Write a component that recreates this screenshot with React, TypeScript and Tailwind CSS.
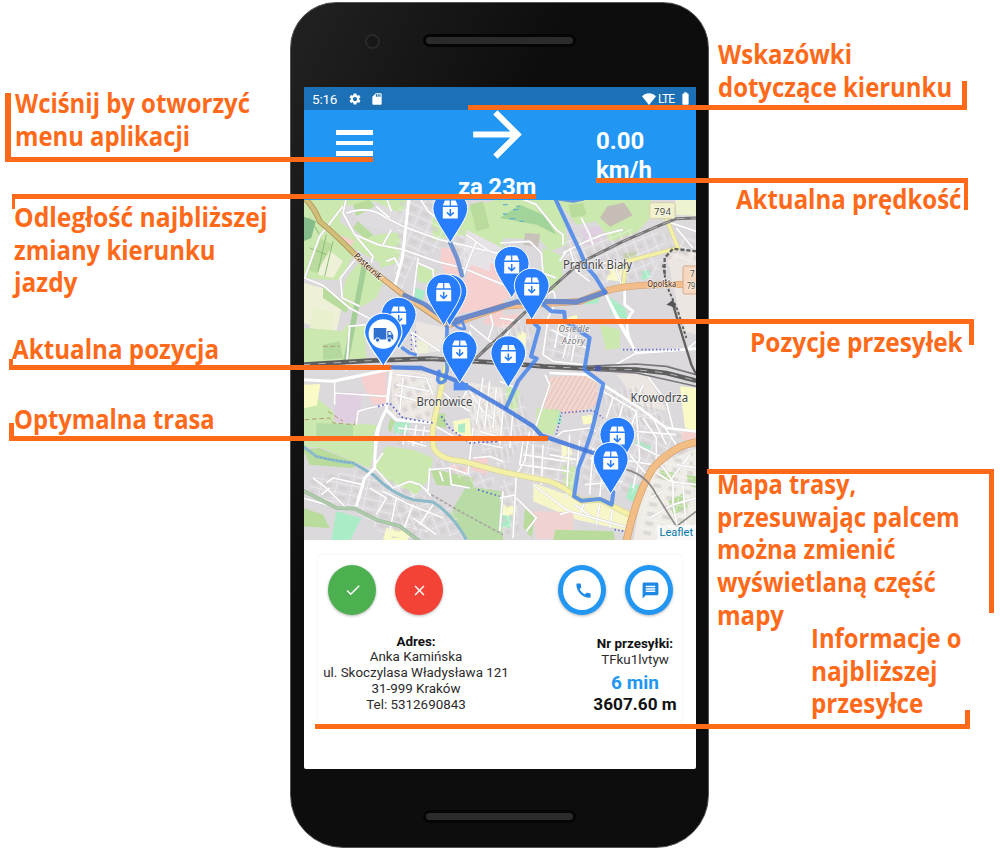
import React from "react";
import {
  MdArrowForward,
  MdCall,
  MdCheck,
  MdClose,
  MdMessage,
  MdSettings,
  MdSdCard,
  MdBatteryFull,
} from "react-icons/md";

type Shape = [color: string, points: string];

const GREEN = "#cbe8ae";
const MEADOW = "#b9dc9c";
const FIELD = "#eef0d8";
const PINK = "#f5d0ce";
const MINT = "#a9ecc6";
const SAND = "#ebe6e1";
const YELLOW = "#fafac6";
const PURPLE = "#e0cfe0";

const northWest: Shape[] = [
  [GREEN, "0,0 310,0 300,40 215,45 120,20 110,70 170,120 290,100 292,170 240,200 150,150 60,90 0,100"],
  ["#dedcdf", "125,25 215,10 300,50 300,110 180,80"],
  [GREEN, "0,90 60,90 155,165 110,245 60,245 0,240"],
  [MEADOW, "150,20 200,5 215,25 160,55"],
  [MEADOW, "165,70 210,110 190,125 150,90"],
  [FIELD, "70,150 120,190 90,240 45,230"],
  [MEADOW, "50,120 90,140 40,225 12,215"],
  ["#83bb8b", "0,55 38,70 25,120 0,130"],
  [GREEN, "170,190 245,245 220,300 150,340 115,300 130,240"],
  [FIELD, "0,255 60,270 120,310 100,400 0,375"],
  ["#e9f0cd", "30,330 95,345 85,400 20,390"],
  [MEADOW, "60,262 140,320 130,345 60,300"],
  [GREEN, "0,390 120,400 130,380 185,380 190,490 0,500"],
  ["#b4d99f", "60,440 110,430 120,480 60,485"],
  ["#a3cf96", "178,190 194,195 135,500 118,500"],
  [GREEN, "235,140 290,150 285,195 230,210"],
  [GREEN, "385,60 600,0 600,150 560,160 480,110 390,130"],
  ["#e6e2e6", "490,95 600,150 600,230 480,205"],
  [MEADOW, "500,20 540,10 560,90 520,100"],
  [PINK, "415,150 450,150 475,235 430,232 412,190"],
  [PINK, "505,200 600,235 600,322 450,350 480,260"],
  [PINK, "110,110 155,130 140,145 105,125"],
  [MINT, "332,268 366,280 358,312 330,300"],
  [GREEN, "340,200 400,215 390,260 345,250"],
  [PINK, "560,335 600,330 600,390 540,375"],
  [SAND, "340,370 430,390 410,460 330,470"],
  [FIELD, "340,430 375,430 375,465 340,465"],
];

const northEast: Shape[] = [
  [GREEN, "0,0 160,0 195,60 200,140 150,160 120,125 0,120"],
  ["#a2d39b", "60,20 130,50 170,110 110,80 0,60"],
  [GREEN, "165,0 455,0 450,60 410,105 330,130 290,70 230,80"],
  ["#c6beb4", "322,25 372,14 398,52 330,86 300,60"],
  [PURPLE, "240,95 300,85 320,115 265,145"],
  ["#c9c2ba", "75,105 120,108 115,148 70,140"],
  [PINK, "-30,195 40,225 50,290 -30,320"],
  [GREEN, "130,150 190,175 185,250 150,290 115,250"],
  [MEADOW, "205,20 250,15 260,50 215,60"],
  ["#edf2cf", "525,0 600,0 600,55 530,50"],
  [YELLOW, "330,200 370,200 360,250 320,245"],
  ["#c5cfab", "370,165 410,160 405,185 370,190"],
  [MINT, "318,290 375,330 385,365 335,350"],
  [GREEN, "300,380 360,395 360,450 318,455"],
  [MINT, "250,300 300,295 295,315 250,320"],
  [YELLOW, "200,360 230,350 235,375 205,385"],
  [PINK, "0,355 60,345 40,390 0,380"],
  [YELLOW, "55,400 80,405 75,455 50,450"],
  [SAND, "500,170 590,160 590,410 550,400"],
  [MINT, "425,220 450,215 450,240 425,245"],
];

const southWest: Shape[] = [
  [SAND, "262,0 405,20 385,160 270,140"],
  [GREEN, "0,55 90,130 100,165 220,170 215,245 200,300 150,280 60,240 0,235"],
  [YELLOW, "0,50 52,48 42,112 0,122"],
  ["#b7dba5", "40,165 150,170 150,215 40,220"],
  [PURPLE, "98,72 180,72 165,168 92,160"],
  [PINK, "175,28 250,8 250,112 208,108 185,60"],
  [MEADOW, "0,245 50,240 160,285 150,300 20,290"],
  [MINT, "275,162 322,165 312,197 272,195"],
  [MEADOW, "262,150 275,160 262,195 255,180"],
  [GREEN, "250,235 330,245 390,270 380,330 340,380 240,330 215,290"],
  [MEADOW, "380,300 510,330 510,360 400,350"],
  ["#b9dca6", "490,355 600,370 600,520 500,520 440,440"],
  [MEADOW, "395,140 425,135 430,180 400,175"],
  [YELLOW, "450,160 500,150 505,210 455,195"],
  [MINT, "465,170 487,165 485,195 465,192"],
  [SAND, "480,40 600,60 600,220 520,210"],
  [PINK, "510,270 555,270 550,320 505,305"],
  [PINK, "440,290 500,300 495,320 445,310"],
  [MINT, "100,430 175,450 140,520 85,515"],
  [MEADOW, "0,420 60,440 80,480 0,475"],
  [YELLOW, "250,480 330,490 310,520 240,515"],
];

const southEast: Shape[] = [
  ["#efd6cf", "148,28 290,15 295,110 215,140 125,120"],
  [MINT, "125,135 180,130 185,165 120,185"],
  [GREEN, "110,120 180,125 160,200 105,190"],
  [YELLOW, "245,145 275,140 280,165 250,170"],
  [GREEN, "20,50 60,70 50,130 15,110"],
  [SAND, "350,20 440,15 500,130 420,110"],
  [YELLOW, "540,55 590,60 590,190 555,180"],
  [PURPLE, "180,320 230,310 220,360 180,350"],
  [GREEN, "185,290 225,295 225,375 190,370"],
  [YELLOW, "185,230 215,235 215,280 185,275"],
  ["#f7f6c8", "100,345 230,390 330,408 395,440 390,490 230,455 100,400"],
  ["#efece6", "450,300 590,240 590,520 400,520 420,400"],
  ["#f0d3d0", "95,430 220,432 220,510 110,512"],
  [MEADOW, "165,485 340,490 345,520 160,520"],
  [MINT, "392,345 420,350 405,405 378,390"],
  [MEADOW, "480,305 525,315 520,345 475,330"],
  [MEADOW, "505,400 550,375 565,420 520,440"],
  [MEADOW, "560,320 590,325 590,360 565,350"],
  [PINK, "545,190 590,195 590,215 545,215"],
  [MINT, "410,215 455,235 450,245 405,228"],
  [YELLOW, "10,410 50,415 45,450 5,445"],
  [MINT, "0,440 35,445 30,480 0,475"],
  [MEADOW, "75,420 105,440 95,510 70,480"],
];

const townBlocks: [id: string, points: string][] = [
  ["gridA", "290,10 400,10 480,100 500,200 420,150 340,180 300,260 330,360 270,260"],
  ["gridB", "780,130 960,90 1100,110 1040,240 880,260 790,190"],
  ["gridC", "740,380 850,420 840,480 730,480"],
  ["gridA", "1010,270 1110,130 1180,110 1180,200 1110,180"],
  ["gridB", "270,530 390,540 380,670 280,650"],
  ["gridD", "480,560 660,590 680,690 600,820 520,740"],
  ["gridC", "20,840 200,810 340,890 380,1020 250,1020 150,930 20,900"],
  ["gridB", "230,820 330,880 460,940 480,1020 300,990"],
  ["gridC", "660,700 820,740 810,880 660,830"],
  ["gridA", "830,700 1000,620 1150,700 1050,800 990,890 840,860"],
  ["gridB", "590,850 640,830 650,1010 590,1010"],
  ["gridC", "1030,820 1170,740 1170,1020 1010,1020"],
  ["gridD", "880,580 1010,560 1100,680 960,680"],
  ["gridB", "400,780 580,840 560,880 400,810"],
  ["gridA", "280,690 390,700 360,750 280,740"],
  ["gridD", "590,370 690,390 670,490 560,490"],
];

const streets: string[] = [
  "M130,0 L120,45 L155,110 L210,175 L205,195",
  "M130,45 Q200,20 250,60 L300,85 L410,125 L560,160",
  "M318,0 L310,80 L298,180 L275,265",
  "M155,110 L225,140 L300,155 L400,190 L480,210 L600,260",
  "M220,25 L260,60 M250,0 L265,40 M265,95 L240,140 M350,0 L375,40 L400,60",
  "M120,25 L50,115 L5,240 L60,262 L140,330 L215,370",
  "M160,180 L112,240 L118,300 L170,325",
  "M345,180 L330,300 M345,195 L390,215 L395,290 M250,190 L275,180 L290,210",
  "M490,110 L560,160 L600,170 M480,235 L500,180 L520,130",
  "M135,385 L190,380 M140,385 L130,520 M500,380 L555,425 L600,450 M555,425 L570,380 L560,340",
  "M325,400 L345,480 M330,405 L410,460 M500,400 L520,470",
  "M591,135 L680,130 L715,165 L720,225 L760,240 M650,0 L700,20 L760,95 L780,110 L780,140",
  "M780,165 L850,130 L900,110 L960,95 M770,190 L790,160 M800,150 L820,220 L860,250",
  "M835,60 L860,110 L870,140 M880,200 L930,190 L960,270",
  "M906,285 L930,340 L960,400 L1000,465",
  "M965,270 L965,320 L990,340 Q950,380 1000,465 L1150,455 L1180,430",
  "M1000,465 L920,510 M1120,90 L1170,150 M1090,70 L1180,100",
  "M735,290 Q760,260 755,320 L735,360 L720,470 L750,490 L840,500",
  "M770,370 L755,450 M800,400 L780,480 M820,410 L805,490 M745,395 L850,450",
  "M591,360 L650,370 M620,390 L600,440",
  "M0,545 L90,550 L150,540 L210,522 L265,513 L250,635 L280,665 L310,670 L390,675",
  "M250,635 Q215,690 215,730 L215,810 L185,840 L160,925",
  "M95,545 L95,620 M95,585 L250,595 M160,680 L165,640 L200,630 L250,620",
  "M280,530 L370,540 L390,590 M280,560 L380,580 M275,590 L385,620 M300,540 L290,640",
  "M285,690 L385,700 M270,715 L370,745 M310,680 L300,740 M340,680 L330,745 M365,685 L355,735",
  "M390,680 L460,720 L600,750 M500,580 L540,640 L580,670 M410,575 L450,610 L500,640",
  "M215,800 L240,765 M215,810 L270,870 L320,850 L350,860 L385,895",
  "M30,840 L70,870 L130,930 M70,855 L90,840 L180,860 M0,900 L90,925 M55,890 L80,870",
  "M200,870 L250,900 L220,950 M240,880 L320,920 L420,960 M280,900 L260,1000 M330,920 L300,1000 M390,920 L350,980 M330,960 L400,1010",
  "M380,810 L375,880 L350,860 M380,815 L440,810 L500,830 M440,810 L445,860 L500,870 M410,820 L420,850",
  "M510,690 L495,830 M530,700 L600,720 M510,780 L560,775 L600,790",
  "M500,560 L480,600 M540,540 L520,680 M560,550 L545,690 M580,570 L570,690 M600,640 L590,740 M630,640 L620,750",
  "M591,550 L640,570 M726,530 L740,560 L690,710 M680,700 L665,790 L640,830 L630,1020",
  "M740,525 L850,530 L900,560 L1010,630 L1090,690 L1180,700",
  "M1020,515 L1060,570 L1090,610 L1110,690 M1020,560 L1000,610",
  "M760,715 L780,700 L860,690 L880,700 M740,770 L820,785 M800,710 L790,900 M830,725 L815,880",
  "M660,730 L650,800 L800,820 M660,770 L790,790 M690,740 L690,850 M720,740 L715,860",
  "M590,900 L640,890 M600,880 L590,1000 M640,900 L700,960 L670,1000",
  "M860,780 L990,790 L1050,800 M870,750 L860,890 M900,800 L890,900 M930,800 L925,870 M845,860 L960,850",
  "M900,580 L1000,640 L980,700 M930,600 L910,660 M960,620 L940,690 M1000,640 L1010,780 L990,870",
  "M1020,660 L1060,720 L1060,790 M1050,660 L1090,740 M1080,680 L1120,740 M1000,700 L1120,710",
  "M1000,740 L1080,780 M980,770 L1040,840",
  "M815,920 L870,960 L980,990 M850,900 L830,950 M890,920 L880,980 M930,920 L920,990 M800,940 L770,950",
  "M690,860 L770,920 L800,940 L980,990",
  "M1040,810 L1100,850 L1180,860 M1060,780 L1110,850 L1110,920 L1040,960 M1100,850 L1160,770",
  "M1110,920 L1180,900 M1080,880 L1040,900 M1140,860 L1150,1000 M1120,800 L1180,810 M1110,920 L1130,1020",
];

const parcelPins: [x: number, y: number][] = [
  [450.3, 243],
  [511.7, 298],
  [531.7, 320],
  [449.5, 326],
  [443.7, 325.7],
  [398.7, 349],
  [459.7, 383],
  [508.3, 387.5],
  [617.3, 469],
  [610.7, 494],
];

function Quadrant({ shapes, offset }: { shapes: Shape[]; offset: string }) {
  return (
    <g transform={offset}>
      {shapes.map(([color, points], i) => (
        <polygon key={i} points={points} fill={color} />
      ))}
    </g>
  );
}

function Grid({ id, angle, w, h }: { id: string; angle: number; w: number; h: number }) {
  return (
    <pattern id={id} width={w} height={h} patternUnits="userSpaceOnUse" patternTransform={`rotate(${angle})`}>
      <path d={`M0,0 H${w} M0,0 V${h}`} stroke="#f8f7f8" strokeWidth="4.5" fill="none" />
      <rect x={w * 0.25} y={h * 0.3} width={w * 0.5} height={h * 0.4} fill="#d3cecf" />
    </pattern>
  );
}

function ParcelPin({ x, y }: { x: number; y: number }) {
  return (
    <g transform={`translate(${x} ${y})`}>
      <path
        d="M0,0 C-5.5,-10.5 -17.4,-25 -17.4,-34.3 A17.4,17.4 0 0 1 17.4,-34.3 C17.4,-25 5.5,-10.5 0,0Z"
        fill="#277dfb"
        stroke="#fff"
        strokeWidth="1"
      />
      <path d="M-5.4,-42.6 H-.6 V-37.4 H-7.5Z M5.4,-42.6 H.6 V-37.4 H7.5Z M-7.5,-36 H7.5 V-24.4 H-7.5Z" fill="#fff" />
      <path d="M0,-34 V-27.5 M-3.4,-30.6 L0,-27.2 L3.4,-30.6" stroke="#277dfb" strokeWidth="1.5" fill="none" />
    </g>
  );
}

function TruckPin() {
  return (
    <g transform="translate(383.3 366.5)">
      <path
        d="M0,0 C-5.5,-10.5 -18.7,-24 -18.7,-34.5 A18.7,18.7 0 0 1 18.7,-34.5 C18.7,-24 5.5,-10.5 0,0Z"
        fill="#277dfb"
        stroke="#fff"
        strokeWidth="1.1"
      />
      <circle cx="0" cy="-32.5" r="14.7" fill="#fff" />
      <path d="M-9.6,-38.5 H3 V-27 H-9.6Z M4,-35.5 H7.2 L10,-31.5 V-27 H4Z" fill="#2f6fcd" />
      <path d="M5.2,-34.4 H6.8 L8.4,-31.8 H5.2Z" fill="#fff" />
      <circle cx="-5.7" cy="-26.5" r="2.2" fill="#2f6fcd" stroke="#fff" strokeWidth=".9" />
      <circle cx="6" cy="-26.5" r="2.2" fill="#2f6fcd" stroke="#fff" strokeWidth=".9" />
    </g>
  );
}

const rails = [
  "M0,500 L200,488 L380,482 L600,495 L720,505 L860,512 L1000,515 L1090,525 L1180,548",
  "M380,482 L520,480 L591,415 L690,320 L740,275 L830,195 L960,130 L1070,82 L1120,62 L1180,60",
  "M520,480 L560,440 L600,425",
];

function RouteMap() {
  return (
    <svg className="block h-[340px] w-[392px]" viewBox="304 200 392 340">
      <defs>
        <Grid id="gridA" angle={24} w={42} h={30} />
        <Grid id="gridB" angle={-22} w={30} h={38} />
        <Grid id="gridC" angle={12} w={46} h={29} />
        <Grid id="gridD" angle={78} w={50} h={17} />
        <pattern id="hatch" width="13" height="13" patternUnits="userSpaceOnUse" patternTransform="rotate(30)">
          <path d="M0,0 V13" stroke="#e3a9a4" strokeWidth="3" />
        </pattern>
      </defs>
      <g transform="translate(303 198) scale(.33333)" fill="none" strokeLinejoin="round">
        <rect width="1200" height="1050" fill="#dcd9dc" />
        <Quadrant shapes={northWest} offset="translate(0 0)" />
        <Quadrant shapes={northEast} offset="translate(591 0)" />
        <Quadrant shapes={southWest} offset="translate(0 510)" />
        <Quadrant shapes={southEast} offset="translate(591 510)" />
        <polygon points="739,538 881,525 886,620 806,650 716,630" fill="url(#hatch)" />
        {townBlocks.map(([id, points], i) => (
          <polygon key={i} points={points} fill={`url(#${id})`} opacity=".65" />
        ))}

        <path d="M20,60 L50,110 M70,110 L45,220 M20,150 L70,170 M90,130 L65,235" stroke="#8dbd78" strokeWidth="3" />
        <path d="M600,20 h14 M630,35 h16 M600,48 h12 M620,62 h18 M650,70 h12 M640,25 h10" stroke="#63b4c4" strokeWidth="4" />
        <path d="M0,745 L40,775 Q100,790 150,795 L210,830 Q270,890 330,905 L390,912 Q450,950 490,1025" stroke="#8bbac8" strokeWidth="9" />
        <path d="M40,777 L150,795 L210,830 L270,885" stroke="#6a93cc" strokeWidth="2.5" strokeDasharray="4 8" />
        <path d="M60,445 H110 M75,640 L120,670 M5,665 L80,660 L90,675 L155,680 L165,640" stroke="#b39a77" strokeWidth="3" strokeDasharray="14 8" />

        {streets.map((d, i) => (
          <g key={i}>
            <path d={d} stroke="#cfcbce" strokeWidth="7" />
            <path d={d} stroke="#fff" strokeWidth="5.2" />
          </g>
        ))}
        <path d="M318,0 L298,180 L275,265 M0,545 L90,550 L265,513 L250,635 Q215,690 215,810 L185,840 L160,925 M250,635 L280,665 L390,675" stroke="#fff" strokeWidth="9" />
        <path d="M740,525 L850,530 L900,560 L1010,630 L1090,690 L1180,700 M906,285 L1000,465 M965,270 L965,320 L990,340 Q950,380 1000,465 L1180,452" stroke="#fff" strokeWidth="8" />

        <path d="M0,878 L100,930 L155,932 L220,965 L290,985 L350,1030" stroke="#9bba9b" strokeWidth="11" />
        <path d="M0,878 L100,930 L155,932 L220,965 L290,985 L350,1030" stroke="#aeccab" strokeWidth="7" />
        <path d="M385,890 L480,945 L600,1010" stroke="#a9a6a4" strokeWidth="5" strokeDasharray="10 5" />

        <path d="M430,500 L400,640 Q380,720 395,755 Q415,785 480,790 L600,822 L740,850 Q790,870 813,893 L836,908 L891,905 L990,955" stroke="#d6d29c" strokeWidth="18" />
        <path d="M430,500 L400,640 Q380,720 395,755 Q415,785 480,790 L600,822 L740,850 Q790,870 813,893 L836,908 L891,905 L990,955" stroke="#f4f1a6" strokeWidth="14" />
        <path d="M1090,60 L1125,150 L970,190 L960,265" stroke="#d6d29c" strokeWidth="13" />
        <path d="M1090,60 L1125,150 L970,190 L960,265" stroke="#f4f1a6" strokeWidth="10" />

        <path d="M5,0 Q35,30 50,70 Q110,120 180,195 L300,290 L440,385" stroke="#b3935c" strokeWidth="17" />
        <path d="M5,0 Q35,30 50,70 Q110,120 180,195" stroke="#d0bf78" strokeWidth="12" />
        <path d="M170,188 L300,290 L440,385" stroke="#f1c28a" strokeWidth="12" />
        <path d="M440,380 L600,325 L831,310 L906,280 Q980,255 1180,260" stroke="#cf9f6d" strokeWidth="20" />
        <path d="M440,380 L600,325 L831,310 L906,280 Q980,255 1180,260" stroke="#f2bd8a" strokeWidth="17" />
        <path d="M1190,732 Q1120,735 1050,810 Q1000,890 970,1030" stroke="#cf9f6d" strokeWidth="23" />
        <path d="M1190,732 Q1120,735 1050,810 Q1000,890 970,1030" stroke="#f3bd86" strokeWidth="19" />

        {rails.map((d, i) => (
          <g key={i}>
            <path d={d} stroke={i === 0 ? "#5f5e5e" : "#777676"} strokeWidth={i === 0 ? 14 : 9} />
            <path d={d} stroke="#b5b4b4" strokeWidth="3" strokeDasharray={i === 0 ? "22 24" : "26 18"} />
          </g>
        ))}
        <path d="M840,505 L1000,498 L1090,505 L1180,530 M860,516 L1000,525 L1180,565" stroke="#77767a" strokeWidth="5" />
        <path d="M1180,160 L1110,152 L1085,180 L1085,230" stroke="#62605f" strokeWidth="7" strokeDasharray="12 6" />
        <path d="M1110,320 L1140,420 L1165,500 L1180,530" stroke="#62605f" strokeWidth="7" />
        <path d="M1080,200 L1090,260 L1125,340 L1150,420" stroke="#62605f" strokeWidth="6" strokeDasharray="9 6" />
        <path d="M1090,320 L1110,305 L1120,330Z" fill="#555" />
        <path d="M970,815 Q1030,830 1060,890 L1120,985 L1180,940" stroke="#8c8988" strokeWidth="5" />
        <path d="M225,625 L260,615 L300,660 L390,675 M415,655 L440,690 L500,735 L590,730 M525,875 L590,895" stroke="#5e68cc" strokeWidth="5" strokeDasharray="5 8" />
        <path d="M760,710 L775,645 L870,637 L900,660 M960,455 L1130,455 M935,995 L965,1000" stroke="#5e68cc" strokeWidth="5" strokeDasharray="4 7" />
        <path d="M325,410 V460 M338,400 V450" stroke="#5e68cc" strokeWidth="4" strokeDasharray="4 10" />

        <g stroke="#4583ea" strokeOpacity=".84" strokeWidth="13" strokeLinecap="round">
          <path d="M442,135 L462,180 L477,232" stroke="#5b86cf" />
          <path d="M304,292 L365,318 L436,372" stroke="#557fd2" />
          <path d="M440,372 L600,325 L640,312 L731,310 L820,312 L906,283" stroke="#557fd2" strokeWidth="16" />
          <path d="M756,0 L831,160 L850,205 L876,235 L906,283" strokeWidth="12" />
          <path d="M770,4 L810,10 L840,4" strokeWidth="8" />
          <path d="M721,320 L746,340 L784,342 L786,368 L860,420 L844,515 L901,558 L866,700 L846,760 L826,810 L813,895 L836,908 L891,903 L926,920 L931,882" strokeWidth="12" />
          <path d="M686,368 L708,390 L684,475 L701,482 L669,520 L645,550 L609,630" strokeWidth="12" />
          <path d="M265,508 L355,510 L440,540 L480,558 L600,628 L691,685 L716,713 L871,765 L920,780" stroke="#3a74dd" />
          <path d="M298,450 L320,465 L338,470" strokeWidth="10" />
          <path d="M432,385 L432,520 M408,520 L404,545 Q410,562 426,548 L430,525" strokeWidth="11" />
          <path d="M450,380 L478,370 L486,392 Q470,396 455,380" strokeWidth="8" />
        </g>
        <path d="M452,555 H495 V577 H452Z" fill="#4f8df0" />
        <rect x="876" y="503" width="18" height="16" fill="#4a57a8" />

        <rect x="1040" y="14" width="76" height="48" rx="6" fill="#f1f0cc" stroke="#d4d0ac" strokeWidth="3" />
        <rect x="1140" y="204" width="60" height="84" rx="6" fill="#f6d7c0" stroke="#d2aa8e" strokeWidth="3" />
      </g>

      <g fontFamily="'Noto Sans', sans-serif" fill="#454545" stroke="#fff" strokeOpacity=".65" strokeWidth="1.6" paintOrder="stroke">
        <text x="563" y="269" fontSize="12.4" textLength="69" lengthAdjust="spacingAndGlyphs">Prądnik Biały</text>
        <text x="416.4" y="405.8" fontSize="12" textLength="56" lengthAdjust="spacingAndGlyphs">Bronowice</text>
        <text x="630.6" y="401.8" fontSize="12" textLength="57.5" lengthAdjust="spacingAndGlyphs">Krowodrza</text>
        <text x="647.3" y="287.3" fontSize="8.4" fontWeight="500" textLength="29" lengthAdjust="spacingAndGlyphs" fill="#59381f">Opolska</text>
        <text transform="translate(353.3 256.5) rotate(43)" fontSize="8.8" fontWeight="500" textLength="35" fill="#59412a">Pasternik</text>
        <g fontStyle="italic" fill="#777" fontSize="9">
          <text x="558.5" y="331.5" textLength="31">Osiedle</text>
          <text x="562" y="343.5" textLength="23">Azory</text>
        </g>
        <g fontSize="9.6" fill="#4a4a35">
          <text x="654" y="214.8" textLength="17">794</text>
          <text x="690" y="277" fontSize="9" textLength="4.6" lengthAdjust="spacingAndGlyphs">7</text>
          <text x="687" y="289" fontSize="9" textLength="8" lengthAdjust="spacingAndGlyphs">79</text>
        </g>
      </g>

      {parcelPins.map(([x, y], i) => (
        <ParcelPin key={i} x={x} y={y} />
      ))}
      <TruckPin />
    </svg>
  );
}

function StatusBar() {
  return (
    <div className="flex h-[23px] items-center bg-[#1b70b6] pl-2 pr-[3px] text-white">
      <span className="w-[36px] pt-px text-[13.5px] tracking-[-0.2px]">5:16</span>
      <MdSettings className="size-[14px]" />
      <MdSdCard className="ml-2 size-[14px]" />
      <svg className="ml-auto h-[12px] w-[14px]" viewBox="0 0 14 12" fill="currentColor">
        <path d="M7 12 0 3.2C4-.9 10-.9 14 3.2Z" />
      </svg>
      <span className="ml-[2px] w-[20px] text-[12px] tracking-[-0.9px]">LTE</span>
      <MdBatteryFull className="size-[15px]" />
    </div>
  );
}

function AppBar() {
  return (
    <div className="grid h-[90px] grid-cols-[102px_182px_1fr] overflow-hidden bg-[#2196f3] text-white">
      <div className="flex flex-col gap-[6px] pl-[32px] pt-[20px]">
        <span className="h-[4.5px] w-[37px] bg-white" />
        <span className="h-[4.5px] w-[37px] bg-white" />
        <span className="h-[4.5px] w-[37px] bg-white" />
      </div>
      <div className="flex flex-col items-center">
        <MdArrowForward className="-mt-[12.5px] size-[73px] shrink-0" />
        <span className="mt-[2px] text-[24px] font-bold leading-[28px] tracking-[-0.2px]">za 23m</span>
      </div>
      <div className="pl-[8px] pt-[17px] text-[24px] font-bold leading-[29px]">
        0.00
        <br />
        km/h
      </div>
    </div>
  );
}

const roundButton = "flex h-[50px] w-[48px] items-center justify-center rounded-[50%] shadow-[0_1px_3px_rgba(0,0,0,0.3)]";

function DeliveryCard() {
  return (
    <div className="mx-[14px] mt-[15px] h-[169px] rounded-[4px] bg-white shadow-[0_0_2px_rgba(0,0,0,0.12)]">
      <div className="flex pl-[10px] pr-[9px] pt-[10px]">
        <button className={`${roundButton} bg-[#4caf50] text-white`}><MdCheck className="ml-[2px] size-[18px]" /></button>
        <button className={`${roundButton} ml-[19px] bg-[#f44336] text-white`}><MdClose className="ml-[1px] size-[17px]" /></button>
        <button className={`${roundButton} ml-auto border-[5px] border-[#2196f3] bg-white text-[#1e88e5]`}><MdCall className="ml-[2px] size-[19px]" /></button>
        <button className={`${roundButton} ml-[19px] border-[5px] border-[#2196f3] bg-white text-[#1e88e5]`}><MdMessage className="ml-[2px] size-[19px]" /></button>
      </div>
      <div className="flex justify-between text-center text-[13.4px] leading-[15.9px] text-[#2b2b2b]">
        <div className="-ml-[2px] w-[200px] whitespace-nowrap pt-[18.5px]">
          <p className="font-bold text-[#111]">Adres:</p>
          <p>Anka Kamińska</p>
          <p>ul. Skoczylasa Władysława 121</p>
          <p>31-999 Kraków</p>
          <p>Tel: 5312690843</p>
        </div>
        <div className="mr-[-3px] w-[100px] whitespace-nowrap pt-[21px]">
          <p className="font-bold text-[#111]">Nr przesyłki:</p>
          <p>TFku1lvtyw</p>
          <p className="mt-[4px] text-[19px] font-bold leading-[22px] text-[#2196f3]">6 min</p>
          <p className="text-[17.2px] font-bold leading-[21px] text-[#111]">3607.60 m</p>
        </div>
      </div>
    </div>
  );
}

function Speaker() {
  return <div className="h-[13px] w-[153px] rounded-full border-[3px] border-[#050505] bg-[#2b2b2b]" />;
}

function Phone() {
  return (
    <div className="ml-[290px] mt-[2px] flex h-[846px] w-[419px] flex-col rounded-[46px_46px_53px_53px] border border-[#555] bg-[linear-gradient(115deg,#222_0%,#0d0d0d_35%,#0d0d0d_100%)] pl-[13px] font-['Roboto',sans-serif]">
      <div className="flex h-[84px] items-start pt-[30px]">
        <span className="ml-[61px] mt-[1px] size-[15px] rounded-full border-2 border-[#2a2a2a] bg-[#171717]" />
        <div className="ml-[43px] mt-[1px]"><Speaker /></div>
      </div>
      <div className="h-[682px] w-[392px] shrink-0 overflow-hidden rounded-b-[2px] bg-white">
        <StatusBar />
        <AppBar />
        <div className="relative">
          <RouteMap />
          <span className="absolute bottom-0 right-0 bg-white/70 px-[3px] text-[11px] leading-[15px] text-[#0078a8]">Leaflet</span>
        </div>
        <DeliveryCard />
      </div>
      <div className="ml-[119px] mt-[41px]"><Speaker /></div>
    </div>
  );
}

function Callout({ place, lines }: { place: string; lines: [text: string, scale: string][] }) {
  return (
    <div className={`absolute whitespace-nowrap font-['Open_Sans',sans-serif] text-[26px] font-bold leading-[32.7px] text-[#ff6a1a] ${place}`}>
      {lines.map(([text, scale]) => (
        <div key={text} className={`w-max origin-left ${scale}`}>{text}</div>
      ))}
    </div>
  );
}

const leaders = [
  "left-[5px] top-[93px] h-[69px] w-[368px] border-b-[5px] border-l-[6px]",
  "left-[12px] top-[194px] h-[15px] w-[524px] border-t-[5px] border-l-[3px]",
  "left-[9px] top-[359px] h-[11px] w-[382px] border-b-[5px] border-l-[4px]",
  "left-[9px] top-[423px] h-[18px] w-[539px] border-b-[5px] border-l-[5px]",
  "left-[468px] top-[81px] h-[29px] w-[499px] border-b-[5px] border-r-[5px]",
  "left-[596px] top-[178px] h-[32px] w-[372px] border-t-[5px] border-r-[4px]",
  "left-[526px] top-[319px] h-[26px] w-[448px] border-t-[5px] border-r-[5px]",
  "left-[707px] top-[469px] h-[144px] w-[287px] border-t-[5px] border-r-[5px]",
  "left-[315px] top-[710px] h-[19px] w-[655px] border-b-[5px] border-r-[5px]",
];

export default function App() {
  return (
    <main className="relative flex h-[850px] w-[1000px] items-start overflow-hidden bg-white">
      <Phone />
      <Callout place="left-[15px] top-[87px]" lines={[["Wciśnij by otworzyć", "scale-x-[0.92]"], ["menu aplikacji", "scale-x-[0.917]"]]} />
      <Callout place="left-[14px] top-[201px]" lines={[["Odległość najbliższej", "scale-x-[0.95]"], ["zmiany kierunku", "scale-x-[0.92]"], ["jazdy", "scale-x-[0.94]"]]} />
      <Callout place="left-[12px] top-[333px]" lines={[["Aktualna pozycja", "scale-x-[0.93]"]]} />
      <Callout place="left-[14px] top-[403px]" lines={[["Optymalna trasa", "scale-x-[0.915]"]]} />
      <Callout place="left-[718px] top-[38px]" lines={[["Wskazówki", "scale-x-[0.925]"], ["dotyczące kierunku", "scale-x-[0.92]"]]} />
      <Callout place="left-[736px] top-[183px]" lines={[["Aktualna prędkość", "scale-x-[0.923]"]]} />
      <Callout place="left-[750px] top-[326px]" lines={[["Pozycje przesyłek", "scale-x-[0.938]"]]} />
      <Callout
        place="left-[717px] top-[468px]"
        lines={[
          ["Mapa trasy,", "scale-x-[0.91]"],
          ["przesuwając palcem", "scale-x-[0.925]"],
          ["można zmienić", "scale-x-[0.922]"],
          ["wyświetlaną część", "scale-x-[0.92]"],
          ["mapy", "scale-x-[0.925]"],
        ]}
      />
      <Callout place="left-[811px] top-[622px]" lines={[["Informacje o", "scale-x-[0.915]"], ["najbliższej", "scale-x-[0.94]"], ["przesyłce", "scale-x-[0.93]"]]} />
      {leaders.map((place) => (
        <div key={place} className={`absolute border-[#ff6a1a] ${place}`} />
      ))}
    </main>
  );
}
